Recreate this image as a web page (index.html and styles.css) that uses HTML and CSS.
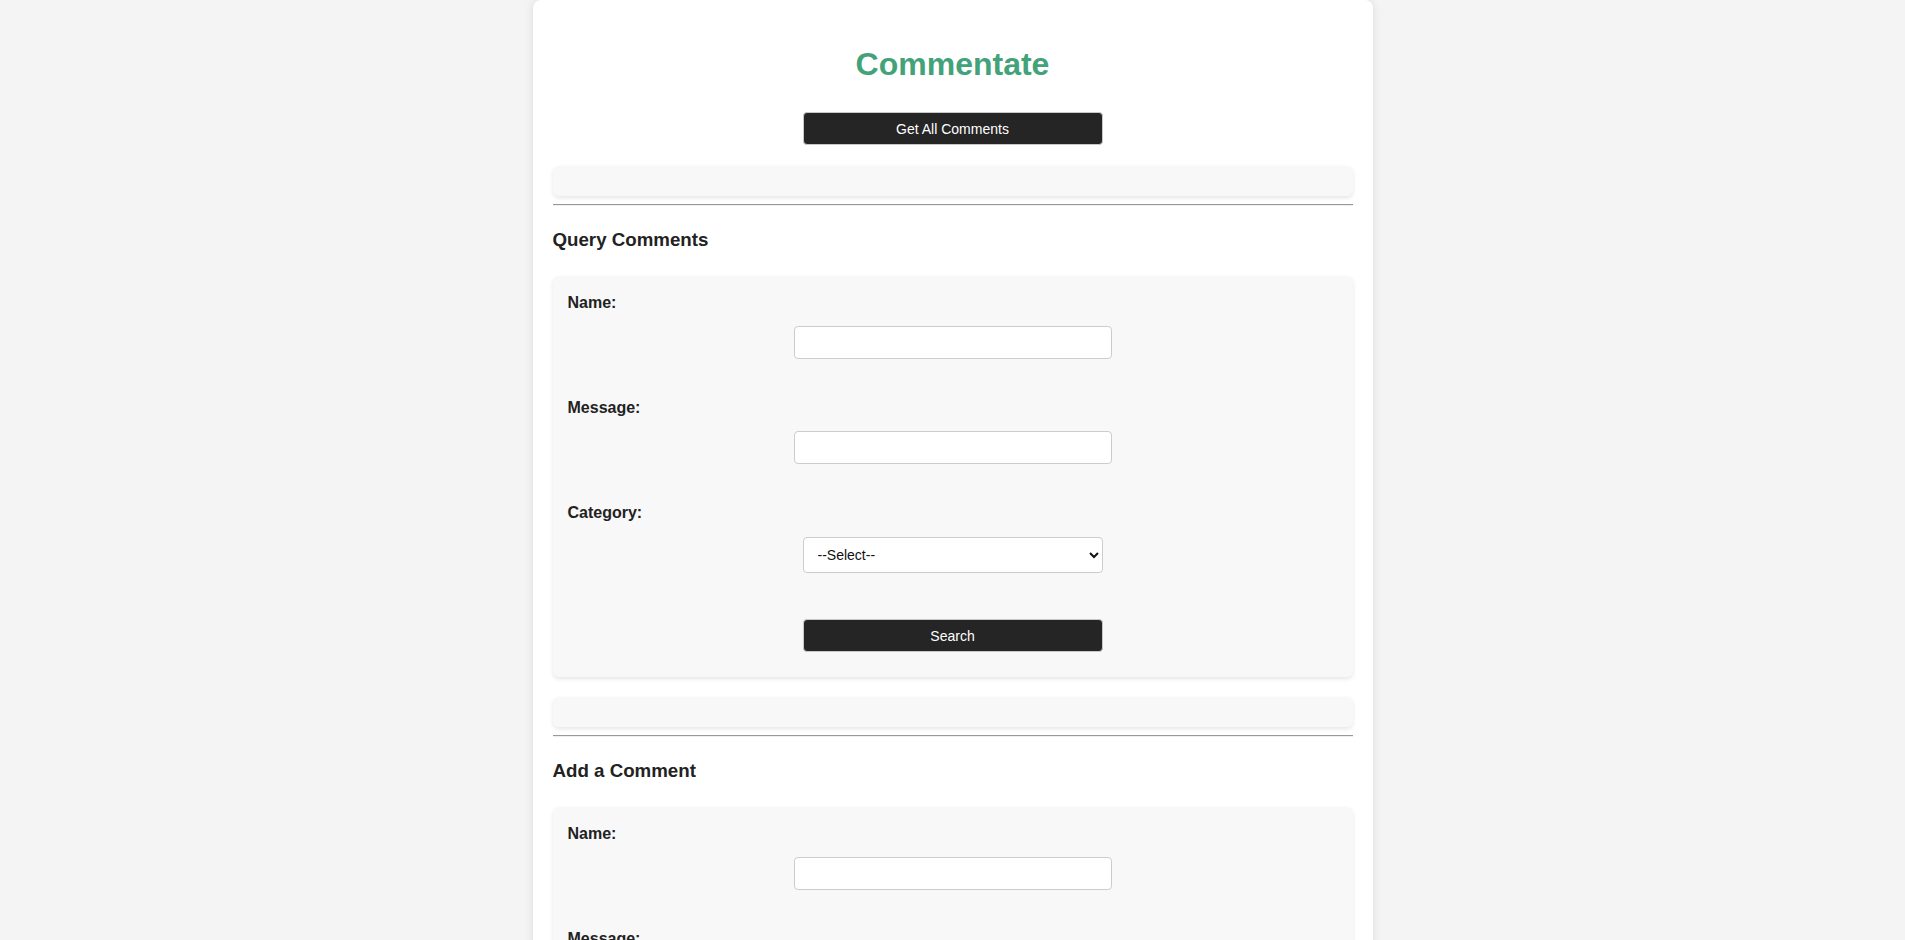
FILE: index.html
```html
<!DOCTYPE html>
<html lang="en">
<head>
<meta charset="utf-8">
<title>Commentate</title>
<link rel="stylesheet" href="styles.css">
</head>
<body>
<div class="container">
  <h1 class="title">Commentate</h1>
  <button class="btn btn-top" type="button">Get All Comments</button>
  <div class="results"></div>
  <hr class="divider">

  <h3 class="section-title">Query Comments</h3>
  <form class="form-panel">
    <label class="field-label">Name:</label>
    <input class="text-input" type="text">
    <label class="field-label">Message:</label>
    <input class="text-input" type="text">
    <label class="field-label">Category:</label>
    <select class="select-input">
      <option>--Select--</option>
    </select>
    <button class="btn btn-form" type="button">Search</button>
  </form>
  <div class="results"></div>
  <hr class="divider">

  <h3 class="section-title">Add a Comment</h3>
  <form class="form-panel">
    <label class="field-label">Name:</label>
    <input class="text-input" type="text">
    <label class="field-label">Message:</label>
    <input class="text-input" type="text">
    <label class="field-label">Category:</label>
    <select class="select-input">
      <option>--Select--</option>
    </select>
    <button class="btn btn-form" type="button">Submit</button>
  </form>
  <div class="results"></div>
</div>
</body>
</html>
```

FILE: styles.css
```css
html, body {
  margin: 0;
  padding: 0;
}

body {
  background: #f4f4f4;
  font-family: "Liberation Sans", Arial, sans-serif;
  color: #222;
}

.container {
  width: 800px;
  margin: 0 auto;
  padding: 20px 20px 40px;
  background: #fff;
  border-radius: 8px;
  box-shadow: 0 0 10px rgba(0, 0, 0, 0.1);
}

.title {
  margin: 26px 0 29px;
  font-size: 32px;
  line-height: 37px;
  font-weight: bold;
  text-align: center;
  color: #43a27a;
}

.btn {
  display: block;
  width: 300px;
  height: 33px;
  margin: 0 auto;
  padding: 0;
  background: #252525;
  color: #fff;
  border: 1px solid #c8c8c8;
  border-radius: 4px;
  font-family: "Liberation Sans", Arial, sans-serif;
  font-size: 14px;
  cursor: pointer;
}

.results {
  margin-top: 21px;
  height: 30px;
  background: #f8f8f8;
  border-radius: 6px;
  box-shadow: 0 2px 4px rgba(0, 0, 0, 0.1);
}

.divider {
  margin: 8px 0 0;
  border: 0;
  border-top: 1px solid #999999;
  border-bottom: 1px solid #eeeeee;
  height: 0;
}

.section-title {
  margin: 23px 0 25px;
  font-size: 18.72px;
  line-height: 22px;
  font-weight: bold;
  color: #222;
}

.form-panel {
  display: flex;
  flex-direction: column;
  align-items: center;
  padding: 18px 15px 25px;
  background: #f8f8f8;
  border-radius: 6px;
  box-shadow: 0 2px 4px rgba(0, 0, 0, 0.1);
}

.form-panel + .results {
  margin-top: 20px;
}

.field-label {
  align-self: stretch;
  display: block;
  font-size: 16px;
  line-height: 18px;
  font-weight: bold;
  color: #222;
  margin-bottom: 14px;
}

.text-input {
  box-sizing: border-box;
  width: 318px;
  height: 33px;
  margin: 0 0 40px;
  padding: 8px;
  border: 1px solid #cccccc;
  border-radius: 4px;
  background: #fff;
  font-family: "Liberation Sans", Arial, sans-serif;
  font-size: 13.33px;
}

.select-input {
  box-sizing: border-box;
  width: 300px;
  height: 36px;
  margin: 1px 0 46px;
  padding: 0 8px 0 10px;
  border: 1px solid #cccccc;
  border-radius: 4px;
  background: #fff;
  color: #111;
  font-family: "Liberation Sans", Arial, sans-serif;
  font-size: 14px;
}

.btn-form {
  margin: 0;
}
```
